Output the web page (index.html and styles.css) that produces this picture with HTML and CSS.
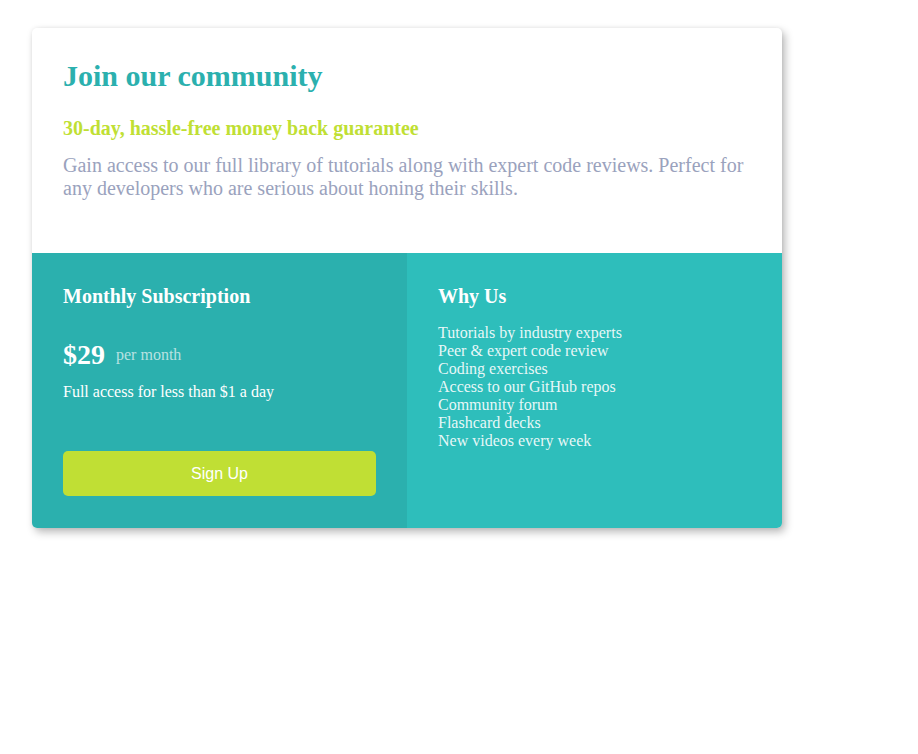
FILE: index.html
```html
<!DOCTYPE html>
<html lang="en">
<head>
<meta charset="utf-8">
<title>Join our community</title>
<link rel="stylesheet" href="styles.css">
</head>
<body>
<main class="card">
  <section class="intro">
    <h1 class="title">Join our community</h1>
    <h2 class="subtitle">30-day, hassle-free money back guarantee</h2>
    <p class="lead">Gain access to our full library of tutorials along with expert code reviews. Perfect for any developers who are serious about honing their skills.</p>
  </section>
  <div class="bottom">
    <section class="plan">
      <h3 class="heading">Monthly Subscription</h3>
      <div class="price-row">
        <span class="price">$29</span>
        <span class="period">per month</span>
      </div>
      <p class="note">Full access for less than $1 a day</p>
      <button class="signup" type="button">Sign Up</button>
    </section>
    <section class="why">
      <h3 class="heading">Why Us</h3>
      <ul class="features">
        <li>Tutorials by industry experts</li>
        <li>Peer &amp; expert code review</li>
        <li>Coding exercises</li>
        <li>Access to our GitHub repos</li>
        <li>Community forum</li>
        <li>Flashcard decks</li>
        <li>New videos every week</li>
      </ul>
    </section>
  </div>
</main>
</body>
</html>
```
FILE: styles.css
```css
* { box-sizing: border-box; }

body {
  margin: 0;
  padding: 28px 32px;
  background: #ffffff;
  font-family: "Liberation Serif", "Times New Roman", serif;
}

.card {
  width: 750px;
  border-radius: 5px;
  overflow: hidden;
  background: #ffffff;
  box-shadow: 3px 4px 8px rgba(0, 0, 0, 0.28), 0 0 4px rgba(0, 0, 0, 0.06);
}

.intro {
  height: 225px;
  padding: 31px 31px 0;
}

.title {
  margin: 0;
  font-size: 30px;
  font-weight: bold;
  color: #2bb0ae;
  line-height: 34px;
}

.subtitle {
  margin: 24px 0 0;
  font-size: 20px;
  font-weight: bold;
  color: #c0df34;
  line-height: 23px;
}

.lead {
  margin: 14px 0 0;
  font-size: 20px;
  line-height: 22.5px;
  color: #9aa2bd;
}

.bottom {
  display: grid;
  grid-template-columns: 1fr 1fr;
  height: 275px;
  color: #ffffff;
}

.plan {
  display: flex;
  flex-direction: column;
  padding: 32px 31px;
  background: #2bb0ae;
}

.why {
  padding: 32px 31px;
  background: #2ebebb;
}

.heading {
  margin: 0;
  font-size: 20px;
  font-weight: bold;
  line-height: 23px;
}

.price-row {
  display: flex;
  align-items: center;
  gap: 11px;
  margin-top: 31px;
}

.price {
  font-size: 28px;
  font-weight: bold;
  line-height: 32px;
}

.period {
  font-size: 16px;
  line-height: 18px;
  color: rgba(230, 244, 244, 0.75);
}

.note {
  margin: 12px 0 0;
  font-size: 16px;
  line-height: 18px;
}

.signup {
  margin-top: auto;
  height: 45px;
  border: none;
  border-radius: 5px;
  background: #c0df34;
  color: #ffffff;
  font-family: "Liberation Sans", Arial, sans-serif;
  font-size: 16px;
  cursor: pointer;
}

.features {
  list-style: none;
  margin: 16px 0 0;
  padding: 0;
  font-size: 16px;
  line-height: 18px;
  color: rgba(255, 255, 255, 0.9);
}
```
